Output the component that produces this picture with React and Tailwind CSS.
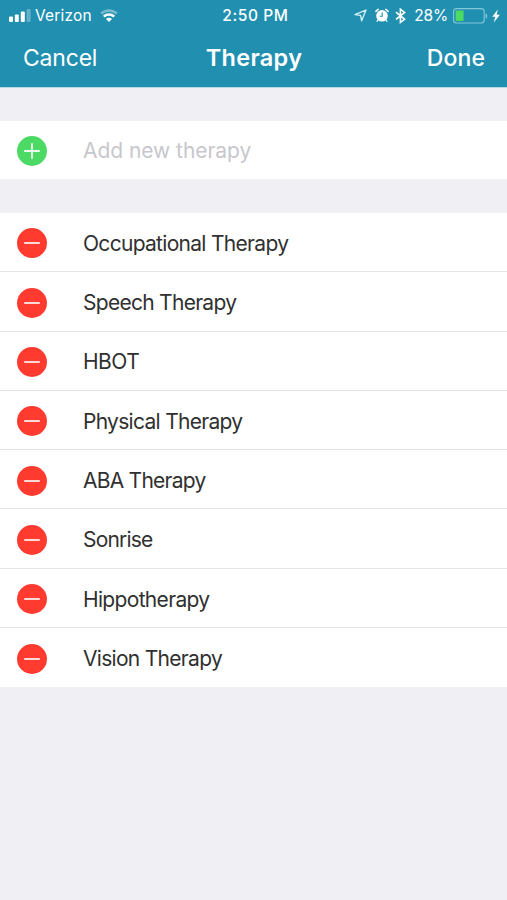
import React, { useState } from 'react';

const initialTherapies = [
  { name: 'Occupational Therapy', tracking: 'tracking-[-0.7px]' },
  { name: 'Speech Therapy', tracking: 'tracking-[-0.72px]' },
  { name: 'HBOT', tracking: 'tracking-[-0.5px]' },
  { name: 'Physical Therapy', tracking: 'tracking-[-0.7px]' },
  { name: 'ABA Therapy', tracking: 'tracking-[-0.75px]' },
  { name: 'Sonrise', tracking: 'tracking-[-0.8px]' },
  { name: 'Hippotherapy', tracking: 'tracking-[-0.67px]' },
  { name: 'Vision Therapy', tracking: 'tracking-[-0.7px]' },
];

const SignalIcon = () => (
  <svg width="22" height="14" viewBox="0 0 22 14" fill="#fff">
    <rect x="0" y="7.5" width="4" height="5.5" rx="1" />
    <rect x="5.8" y="5.5" width="4" height="7.5" rx="1" />
    <rect x="11.8" y="2.5" width="4" height="10.5" rx="1" />
    <rect x="17.6" y="0" width="4" height="13" rx="1" opacity="0.3" />
  </svg>
);

const WifiIcon = () => (
  <svg width="18" height="14" viewBox="0 0 18 14" fill="none" stroke="#fff" strokeWidth="2.5">
    <path d="M1.2 4.7a11 11 0 0 1 15.6 0" opacity="0.4" />
    <path d="M3.8 7.7a7.4 7.4 0 0 1 10.4 0" />
    <path d="M9 12.9 6 10.1a4.3 4.3 0 0 1 6 0z" fill="#fff" stroke="none" />
  </svg>
);

const LocationIcon = () => (
  <svg width="13" height="13" viewBox="0 0 13 13" fill="none" stroke="#d9f3fa" strokeWidth="1.3" strokeLinejoin="round">
    <path d="M12 1 7.6 11.8 6.6 6.4 1 5.7z" />
  </svg>
);

const AlarmIcon = () => (
  <svg width="14" height="15" viewBox="0 0 14 15">
    <circle cx="7" cy="7.8" r="5.8" fill="#fff" />
    <path d="M.9 3.4 3.2 1.2M13.1 3.4l-2.3-2.2" stroke="#fff" strokeWidth="1.5" strokeLinecap="round" />
    <path d="m3 12-1 1.3M11 12l1 1.3" stroke="#fff" strokeWidth="1.2" strokeLinecap="round" />
    <path d="M7.2 4.6v3.6H4.8" fill="none" stroke="#208fb0" strokeWidth="1.1" />
  </svg>
);

const BluetoothIcon = () => (
  <svg width="11" height="16" viewBox="0 0 11 16" fill="none" stroke="#fff" strokeWidth="1.6">
    <path d="m1 4.2 8.6 7.1-4.2 3.1V1.2l4.2 3.2L1 11.4" />
  </svg>
);

const BatteryIcon = () => (
  <svg width="35" height="16" viewBox="0 0 35 16">
    <rect x=".6" y=".6" width="30.6" height="14.4" rx="3" fill="none" stroke="#84c8dc" strokeWidth="1.1" />
    <rect x="2.6" y="2.6" width="8" height="10.4" rx="1" fill="#4cd964" />
    <path d="M32.6 5.2c2.2.8 2.2 4.8 0 5.6z" fill="#84c8dc" />
  </svg>
);

const BoltIcon = () => (
  <svg width="8" height="14" viewBox="0 0 8 14" fill="#fff">
    <path d="M5.8.4.2 7.7h3L1.8 13.6 7.9 5.8H4.7z" />
  </svg>
);

const RoundIcon = ({ type }) => (
  <svg width="30" height="30" viewBox="0 0 30 30" className="shrink-0">
    <circle cx="15" cy="15" r="15" fill={type === 'add' ? '#4cd964' : '#ff3b30'} />
    <path
      d={type === 'add' ? 'M7.2 15h15.6M15 7.2v15.6' : 'M7.2 15h15.6'}
      stroke="#fff"
      strokeOpacity="0.9"
      strokeWidth="1.8"
    />
  </svg>
);

const StatusBar = () => (
  <div className="grid grid-cols-[1fr_auto_1fr] items-center h-[31px] text-[15.5px] leading-none">
    <div className="flex items-center pl-[9px]">
      <SignalIcon />
      <span className="ml-[4px] tracking-[0.2px]">Verizon</span>
      <span className="ml-[8px]"><WifiIcon /></span>
    </div>
    <span className="pl-[4px] font-medium tracking-[0.6px]">2:50 PM</span>
    <div className="flex items-center justify-end pr-[7px]">
      <LocationIcon />
      <span className="ml-[8px]"><AlarmIcon /></span>
      <span className="ml-[6px]"><BluetoothIcon /></span>
      <span className="ml-[8px] tracking-[-0.2px]">28%</span>
      <span className="ml-[5px]"><BatteryIcon /></span>
      <span className="ml-[4px]"><BoltIcon /></span>
    </div>
  </div>
);

const App = () => {
  const [therapies, setTherapies] = useState(initialTherapies);

  const removeTherapy = (name) => {
    setTherapies(therapies.filter((item) => item.name !== name));
  };

  return (
    <div className="min-h-screen bg-[#efeff4] font-['Inter',sans-serif]">
      <header className="h-[88px] bg-[#208fb0] border-b border-[#b5d9e5] text-white">
        <StatusBar />
        <div className="grid grid-cols-[1fr_auto_1fr] items-center h-[54px] pl-[23px] pr-[22px] text-[23px] leading-none">
          <button className="justify-self-start tracking-[-0.2px]">Cancel</button>
          <h1 className="text-[23.5px] font-semibold tracking-[0.3px]">Therapy</h1>
          <button className="justify-self-end font-medium tracking-[0.1px]">Done</button>
        </div>
      </header>

      <div className="mt-[33px] flex items-center h-[58px] bg-white pl-[17px] pt-px">
        <RoundIcon type="add" />
        <span className="ml-[36px] text-[21px] leading-none tracking-[-0.05px] text-[#c7c7cd]">Add new therapy</span>
      </div>

      <ul className="mt-[34px] bg-white">
        {therapies.map((item) => (
          <li
            key={item.name}
            className="flex items-center h-[59.3px] pl-[17px] pt-[2.5px] border-b border-[#e4e4e7] last:border-b-0"
          >
            <button onClick={() => removeTherapy(item.name)}>
              <RoundIcon type="remove" />
            </button>
            <span className={`ml-[36px] text-[21px] leading-none text-[#303030] ${item.tracking}`}>{item.name}</span>
          </li>
        ))}
      </ul>
    </div>
  );
};

export default App;
